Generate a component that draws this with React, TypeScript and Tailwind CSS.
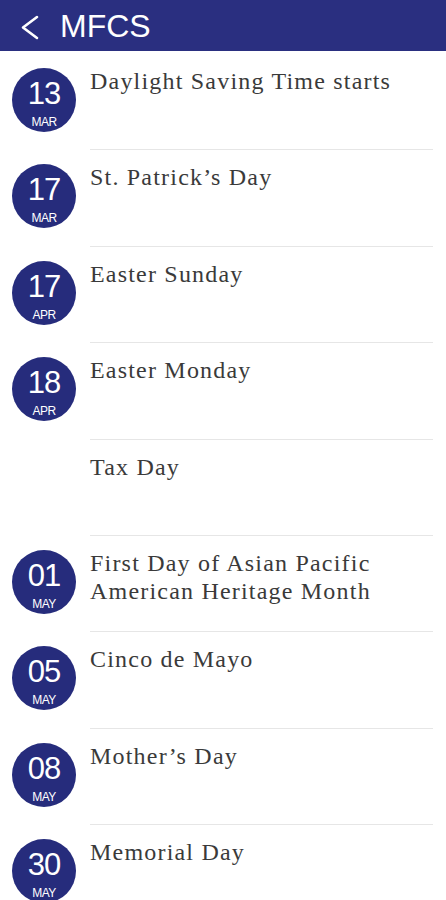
import React from "react";

const events = [
  { day: "13", month: "MAR", title: "Daylight Saving Time starts" },
  { day: "17", month: "MAR", title: "St. Patrick’s Day" },
  { day: "17", month: "APR", title: "Easter Sunday" },
  { day: "18", month: "APR", title: "Easter Monday" },
  { day: "", month: "", title: "Tax Day" },
  { day: "01", month: "MAY", title: "First Day of Asian Pacific American Heritage Month" },
  { day: "05", month: "MAY", title: "Cinco de Mayo" },
  { day: "08", month: "MAY", title: "Mother’s Day" },
  { day: "30", month: "MAY", title: "Memorial Day" },
];

function DateBadge({ day, month }: { day: string; month: string }) {
  if (!day) return <div className="w-16 h-16 shrink-0" />;
  return (
    <div
      className="w-16 h-16 shrink-0 rounded-full bg-[#262c7c] text-white flex flex-col items-center"
      style={{ fontFamily: "'Liberation Sans', Arial, sans-serif" }}
    >
      <span className="text-[31px] leading-none mt-[10px] tracking-[-1px]">{day}</span>
      <span className="text-[12px] leading-none mt-[7px] tracking-[-0.5px]">{month}</span>
    </div>
  );
}

export default function App() {
  return (
    <div className="w-[446px] h-[900px] overflow-hidden bg-white">
      <header className="h-[51px] bg-[#2a2f80] flex items-center">
        <svg width="48" height="51" viewBox="0 0 48 51" className="shrink-0">
          <path d="M37 17 L23 27.5 L37 38" fill="none" stroke="white" strokeWidth="2.6" strokeLinecap="round" strokeLinejoin="round" />
        </svg>
        <h1
          className="text-white text-[32px] leading-none ml-[12px] mt-[1px]"
          style={{ fontFamily: "'Liberation Sans', Arial, sans-serif" }}
        >
          MFCS
        </h1>
      </header>
      <ul className="pt-[3px]">
        {events.map((e, i) => (
          <li key={i} className="flex h-[96.4px]">
            <div className="w-[90px] shrink-0 pl-[12px] pt-[14px]">
              <DateBadge day={e.day} month={e.month} />
            </div>
            <div className="flex-1 mr-[13px] border-b border-[#e6e6e6] pt-[13px]">
              <p
                className="text-[24px] leading-[28px] tracking-[1.2px] text-[#3a3a3a] pr-6"
                style={{ fontFamily: "'Liberation Serif', 'Times New Roman', serif" }}
              >
                {e.title}
              </p>
            </div>
          </li>
        ))}
      </ul>
    </div>
  );
}
